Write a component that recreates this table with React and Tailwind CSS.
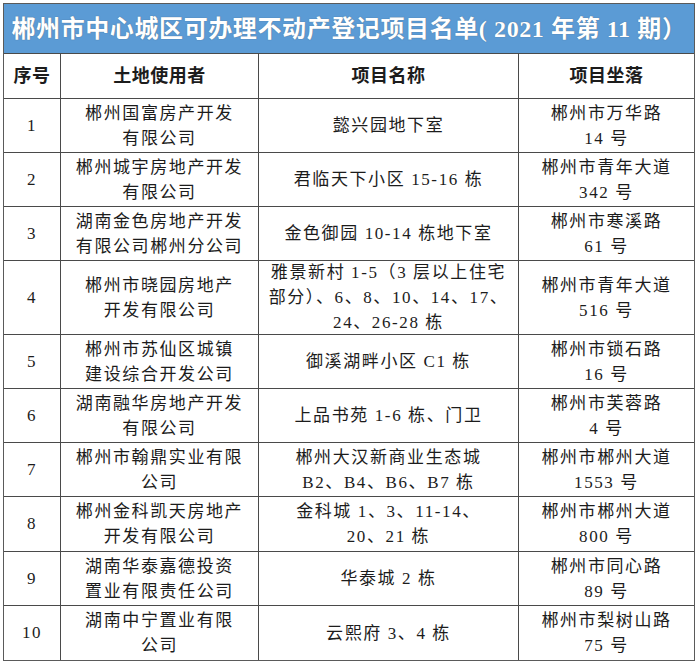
const rows = [
  { no: '1', user: ['郴州国富房产开发', '有限公司'], name: ['懿兴园地下室'], addr: ['郴州市万华路', '14 号'] },
  { no: '2', user: ['郴州城宇房地产开发', '有限公司'], name: ['君临天下小区 15-16 栋'], addr: ['郴州市青年大道', '342 号'] },
  { no: '3', user: ['湖南金色房地产开发', '有限公司郴州分公司'], name: ['金色御园 10-14 栋地下室'], addr: ['郴州市寒溪路', '61 号'] },
  {
    no: '4',
    user: ['郴州市晓园房地产', '开发有限公司'],
    name: ['雅景新村 1-5（3 层以上住宅', '部分）、6、8、10、14、17、', '24、26-28 栋'],
    addr: ['郴州市青年大道', '516 号'],
    tall: true,
  },
  { no: '5', user: ['郴州市苏仙区城镇', '建设综合开发公司'], name: ['御溪湖畔小区 C1 栋'], addr: ['郴州市锁石路', '16 号'] },
  { no: '6', user: ['湖南融华房地产开发', '有限公司'], name: ['上品书苑 1-6 栋、门卫'], addr: ['郴州市芙蓉路', '4 号'] },
  { no: '7', user: ['郴州市翰鼎实业有限', '公司'], name: ['郴州大汉新商业生态城', 'B2、B4、B6、B7 栋'], addr: ['郴州市郴州大道', '1553 号'] },
  { no: '8', user: ['郴州金科凯天房地产', '开发有限公司'], name: ['金科城 1、3、11-14、', '20、21 栋'], addr: ['郴州市郴州大道', '800 号'] },
  { no: '9', user: ['湖南华泰嘉德投资', '置业有限责任公司'], name: ['华泰城 2 栋'], addr: ['郴州市同心路', '89 号'] },
  { no: '10', user: ['湖南中宁置业有限', '公司'], name: ['云熙府 3、4 栋'], addr: ['郴州市梨树山路', '75 号'], last: true },
];

function Lines({ lines }) {
  return (
    <div className="flex flex-col items-center">
      {lines.map((l, i) => (
        <span key={i} className="whitespace-nowrap leading-[25px]">{l}</span>
      ))}
    </div>
  );
}

export default function App() {
  return (
    <div className="w-[700px] h-[664px] bg-white pt-[3px] pl-[3px]">
      <div
        className="w-[692px] border border-[#5a5a5a] text-[#1c1c1c]"
        style={{ fontFamily: '"Liberation Serif", "Noto Sans CJK SC", serif' }}
      >
        {/* title bar */}
        <div className="h-[50px] bg-[#5b9bd5] border-b border-[#4a4a4a] flex items-center justify-center">
          <h1 className="text-white text-[24px] font-bold tracking-[0.6px] whitespace-nowrap [text-shadow:0_0_1px_rgba(60,60,60,0.6)]">
            郴州市中心城区可办理不动产登记项目名单( 2021 年第 11 期）
          </h1>
        </div>

        <div className="grid grid-cols-[57px_198px_260px_175px]">
          {['序号', '土地使用者', '项目名称', '项目坐落'].map((h, i) => (
            <div
              key={h}
              className={
                'h-[45px] flex items-center justify-center border-b border-[#4a4a4a] text-[18px] font-bold tracking-[0.5px] ' +
                (i < 3 ? 'border-r' : '')
              }
            >
              {h}
            </div>
          ))}

          {rows.map((r) => {
            const h = r.tall ? 'h-[74px]' : r.no === '8' ? 'h-[55px]' : 'h-[54px]';
            const bb = r.last ? '' : 'border-b';
            const cell = `${h} ${bb} border-[#4a4a4a] flex items-center justify-center text-[17px] tracking-[1.6px]`;
            return [
              <div key={r.no + 'a'} className={cell + ' border-r'}>{r.no}</div>,
              <div key={r.no + 'b'} className={cell + ' border-r'}><Lines lines={r.user} /></div>,
              <div key={r.no + 'c'} className={cell + ' border-r'}><Lines lines={r.name} /></div>,
              <div key={r.no + 'd'} className={cell}><Lines lines={r.addr} /></div>,
            ];
          })}
        </div>
      </div>
    </div>
  );
}
